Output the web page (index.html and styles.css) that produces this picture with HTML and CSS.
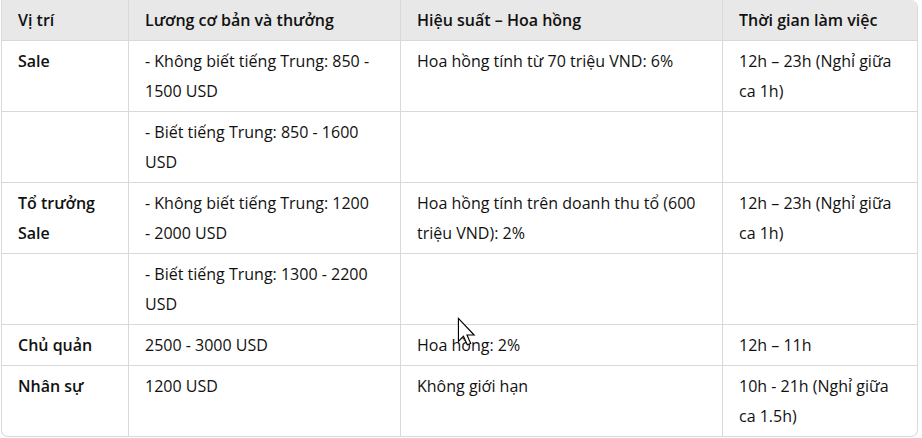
FILE: index.html
```html
<!DOCTYPE html>
<html lang="vi">
<head>
<meta charset="utf-8">
<link rel="stylesheet" href="styles.css">
</head>
<body>
<div class="wrap">
  <table class="tbl">
    <colgroup>
      <col class="c1"><col class="c2"><col class="c3"><col class="c4">
    </colgroup>
    <thead>
      <tr><th>Vị trí</th><th>Lương cơ bản và thưởng</th><th>Hiệu suất – Hoa hồng</th><th>Thời gian làm việc</th></tr>
    </thead>
    <tbody>
      <tr><td class="pos">Sale</td><td>- Không biết tiếng Trung: 850 - 1500 USD</td><td>Hoa hồng tính từ 70 triệu VND: 6%</td><td>12h – 23h (Nghỉ giữa ca 1h)</td></tr>
      <tr><td class="pos"></td><td>- Biết tiếng Trung: 850 - 1600 USD</td><td></td><td></td></tr>
      <tr><td class="pos">Tổ trưởng Sale</td><td>- Không biết tiếng Trung: 1200 <span class="nw">- 2000</span> USD</td><td>Hoa hồng tính trên doanh thu tổ (600 triệu VND): 2%</td><td>12h – 23h (Nghỉ giữa ca 1h)</td></tr>
      <tr><td class="pos"></td><td>- Biết tiếng Trung: 1300 - 2200 USD</td><td></td><td></td></tr>
      <tr><td class="pos">Chủ quản</td><td>2500 - 3000 USD</td><td>Hoa hồng: 2%</td><td>12h – 11h</td></tr>
      <tr class="last"><td class="pos">Nhân sự</td><td>1200 USD</td><td>Không giới hạn</td><td>10h - 21h (Nghỉ giữa ca 1.5h)</td></tr>
    </tbody>
  </table>
</div>
<svg class="cursor" width="20" height="30" viewBox="0 0 14 21"><path d="M1 1 L1 17 L4.5 13.5 L7.2 19.5 L9.6 18.5 L7 12.6 L12 12.6 Z" fill="#fff" stroke="#000" stroke-width="0.8" stroke-linejoin="miter"/></svg>
</body>
</html>
```
FILE: styles.css
```css
html, body { margin: 0; padding: 0; background: #fff; }
body { font-family: "Open Sans", "Noto Sans", sans-serif; color: #111; position: relative; width: 922px; height: 438px; overflow: hidden; }
.wrap {
  margin-left: 1px;
  width: 915px;
  border: 1px solid #d9d9d9;
  border-top: none;
  border-radius: 0 7px 7px 7px;
  overflow: hidden;
}
.tbl { border-collapse: separate; border-spacing: 0; width: 100%; table-layout: fixed; font-size: 16px; }
.c1 { width: 127px; }
.c2 { width: 272px; }
.c3 { width: 322px; }
.c4 { width: auto; }
th, td {
  text-align: left;
  vertical-align: top;
  padding: 5px 16px 5px 16px;
  line-height: 30px;
  border-bottom: 1px solid #d9d9d9;
  border-right: 1px solid #d9d9d9;
}
th:last-child, td:last-child { border-right: none; }
.last td { border-bottom: none; }
th { background: #e8e8e8; font-weight: 600; height: 29px; }
.pos { font-weight: 600; }
.nw { white-space: nowrap; }
.cursor { position: absolute; left: 457px; top: 317px; }
```
